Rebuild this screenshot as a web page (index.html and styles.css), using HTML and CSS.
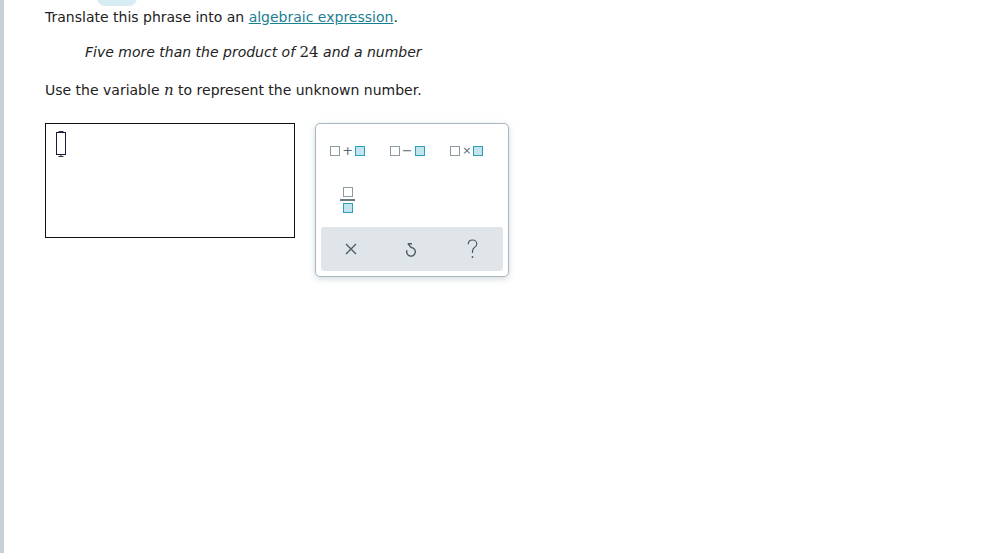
FILE: index.html
```html
<!DOCTYPE html>
<html lang="en">
<head>
  <meta charset="UTF-8" />
  <title>Algebraic expression</title>
  <link rel="stylesheet" href="styles.css">
</head>
<body>
  <div class="side-bar"></div>
  <div class="top-tab"></div>

  <main class="question">
    <p class="prompt">Translate this phrase into an <a href="#">algebraic expression</a>.</p>
    <p class="phrase">Five more than the product of <span class="num">24</span> and a number</p>
    <p class="prompt">Use the variable <span class="var">n</span> to represent the unknown number.</p>

    <div class="answer-area">
      <div class="answer-box">
        <!-- blinking placeholder cursor -->
        <svg class="cursor" width="12" height="27" viewBox="0 0 12 27">
          <path d="M2.5 0.5h5M5 0.5v1.5M2.5 25.5h5M5 25.5v-1.5" stroke="#333" stroke-width="1" fill="none"/>
          <rect x="0.5" y="1.5" width="9" height="22" fill="none" stroke="#1a1a40" stroke-width="1"/>
        </svg>
      </div>

      <div class="keypad">
        <div class="keys">
          <button class="key">
            <span class="sq"></span><span class="op">+</span><span class="sq blue"></span>
          </button>
          <button class="key">
            <span class="sq"></span><span class="op">&minus;</span><span class="sq blue"></span>
          </button>
          <button class="key">
            <span class="sq"></span><span class="op small">&times;</span><span class="sq blue"></span>
          </button>
          <button class="key frac">
            <span class="sq"></span><span class="bar"></span><span class="sq blue"></span>
          </button>
        </div>
        <div class="actions">
          <button class="act">
            <svg width="12" height="12" viewBox="0 0 12 12">
              <path d="M1 1l10 10M11 1L1 11" stroke="#4d5d66" stroke-width="1.4" fill="none"/>
            </svg>
          </button>
          <button class="act">
            <svg width="13" height="15" viewBox="0 0 13 15">
              <path d="M6 5.5A4.3 4.3 0 1 1 2 8.2" stroke="#4d5d66" stroke-width="1.4" fill="none"/>
              <path d="M7 1.8H3.2L6 5.5" stroke="#4d5d66" stroke-width="1.4" fill="none" stroke-linejoin="round"/>
            </svg>
          </button>
          <button class="act">
            <svg width="11" height="20" viewBox="0 0 11 20">
              <path d="M1.2 5.2C1.2 2.6 3 1 5.5 1S9.8 2.7 9.8 5C9.8 7 8.5 8 7 9C5.8 9.8 5.5 10.8 5.5 12.5V14" stroke="#4d5d66" stroke-width="1.2" fill="none"/>
              <circle cx="5.5" cy="18" r="0.9" fill="#4d5d66"/>
            </svg>
          </button>
        </div>
      </div>
    </div>
  </main>
</body>
</html>
```

FILE: styles.css
```css
* {
  box-sizing: border-box;
}

body {
  margin: 0;
  background: #fff;
  font-family: "DejaVu Sans", Verdana, sans-serif;
  font-size: 14px;
  color: #222;
  height: 553px;
  overflow: hidden;
  position: relative;
}

.side-bar {
  position: absolute;
  left: 0;
  top: 0;
  bottom: 0;
  width: 4px;
  background: #c6d1d7;
}

.top-tab {
  position: absolute;
  left: 97px;
  top: -10px;
  width: 40px;
  height: 16px;
  border-radius: 8px;
  background: #d8ecf3;
}

.question {
  padding: 9px 0 0 45px;
}

.prompt {
  margin: 0;
  line-height: 17px;
}

.prompt + .phrase {
  margin-top: 18px;
}

.phrase {
  margin: 0 0 21px 40px;
  font-style: italic;
  line-height: 17px;
}

.num {
  font-family: "DejaVu Serif", "Liberation Serif", serif;
  font-style: normal;
  font-size: 15px;
}

.var {
  font-family: "DejaVu Serif", "Liberation Serif", serif;
  font-style: italic;
  font-size: 15px;
}

a {
  color: #1a7f93;
  text-decoration: underline;
}

.answer-area {
  display: flex;
  align-items: flex-start;
  gap: 20px;
  margin-top: 24px;
}

.answer-box {
  width: 250px;
  height: 115px;
  border: 1px solid #111;
  padding: 7px 0 0 10px;
}

.cursor {
  display: block;
}

.keypad {
  width: 194px;
  border: 1px solid #a9b7bf;
  border-radius: 5px;
  box-shadow: 0 2px 6px rgba(80, 110, 130, 0.25);
  padding: 5px;
  background: #fff;
}

.keys {
  display: grid;
  grid-template-columns: repeat(3, 59.5px);
  grid-template-rows: 44px 54px;
  margin-left: -3px;
}

.key {
  border: 0;
  background: none;
  padding: 0;
  display: flex;
  align-items: center;
  justify-content: center;
  gap: 2px;
  color: #5a6a72;
  font-family: "DejaVu Sans", sans-serif;
}

.sq {
  display: inline-block;
  width: 10px;
  height: 10px;
  border: 1.5px solid #8c9aa2;
  background: #fff;
}

.sq.blue {
  border-color: #2e9fb5;
  background: #c2e4ee;
}

.op {
  font-size: 13px;
  line-height: 10px;
  color: #5a6a72;
}

.op.small {
  font-size: 11px;
}

.key.frac {
  flex-direction: column;
  gap: 2px;
}

.bar {
  display: block;
  width: 15px;
  height: 1.5px;
  background: #6b7a82;
}

.actions {
  display: flex;
  justify-content: space-around;
  align-items: center;
  height: 44px;
  background: #dfe5e8;
  border-radius: 3px;
}

.act {
  border: 0;
  background: none;
  padding: 0;
  width: 40px;
  display: flex;
  align-items: center;
  justify-content: center;
}
```
